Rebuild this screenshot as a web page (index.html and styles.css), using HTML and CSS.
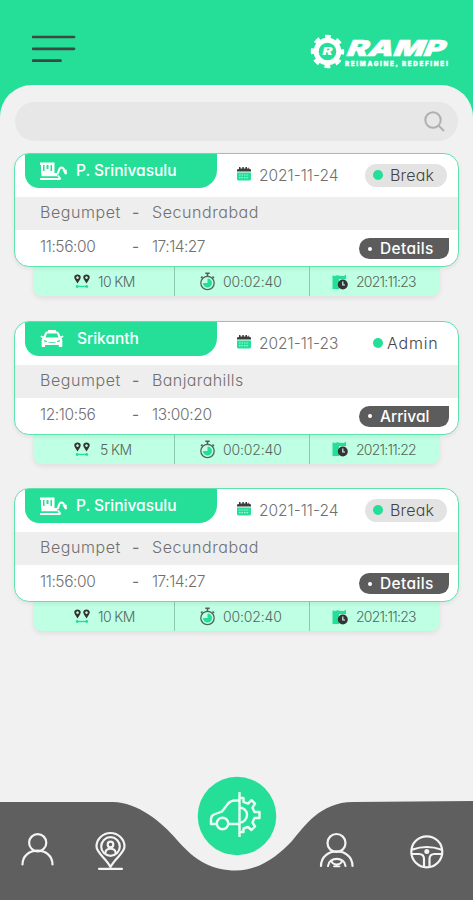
FILE: index.html
```html
<!DOCTYPE html>
<html lang="en">
<head>
<meta charset="utf-8">
<title>Ramp trips</title>
<link rel="stylesheet" href="styles.css">
</head>
<body>
<svg class="defs" width="0" height="0">
  <symbol id="train" viewBox="0 0 28 19">
    <path fill="#fff" fill-rule="evenodd" d="M0 .5H14.500V11L18 14.300H1.500V11.500L1 11V3H0ZM3 3V9H4.500V3ZM6.500 3V7H8.500V3ZM10.500 3V9H12V3Z"/>
    <path d="M0 17H20.500" stroke="#fff" stroke-width="2"/>
    <path d="M14 12H16.500Q18 12 18.500 9.500Q19.500 5.500 21.500 5.500Q23.500 5.500 24.300 8.500" fill="none" stroke="#fff" stroke-width="2"/>
    <path d="M22.500 8L26.500 7.500L27 12L25 12.500Z" fill="#fff"/>
    <path d="M18 13.500l2.500 3.500" stroke="#fff" stroke-width="1.800"/>
  </symbol>
  <symbol id="car" viewBox="0 0 24 18">
    <path fill="#fff" fill-rule="evenodd" d="M8 0h8v1.500h1q1.500 0 2 1.500l1.500 3.500L23 5.500l.5 1.500-2 1 .8 2V17h-3.500v-2H5v2H1.700V10l.8-2-2-1L1 5.500l2.500 1L5 3q.5-1.500 2-1.500h1ZM7 3.500L5.500 7.500h13L17 3.500ZM4 10v1.500l3 .5V11ZM20 10v1.500l-3 .5V11ZM8.500 12.300v.8h7v-.8Z"/>
  </symbol>
  <symbol id="calendar" viewBox="0 0 14 14">
    <path fill="#3c3c3c" d="M0 4.500V2.500L2 2V0h1.500v1.500h1.800V0h1.500v1.500h1.600V0H10v1.500h1.500V0l1 2 1.500.5v2Z"/>
    <path fill="#25df99" d="M0 5.500h14V12q0 1.500-1.500 1.500h-11Q0 13.500 0 12Z"/>
    <path stroke="#9cf3d0" stroke-width="1.200" stroke-dasharray="1.600 .9" d="M2 8h10M2 10.600h10"/>
  </symbol>
  <symbol id="pins" viewBox="0 0 16 15">
    <path fill="#333" fill-rule="evenodd" d="M3.500 9.500L1 5.500C-.8 2.500 1 .5 3.500.5S7.800 2.500 6 5.500ZM3.500 2.300a1.300 1.300 0 1 0 .01 0ZM12.500 9.500L10 5.500C8.200 2.500 10 .5 12.500.5s4.300 2 2.500 5ZM12.500 2.300a1.300 1.300 0 1 0 .01 0Z"/>
    <path d="M2 12.500h12" stroke="#25df99" stroke-width="1.300"/>
    <circle cx="3.200" cy="12.500" r="1.400" fill="#25df99"/><circle cx="12.700" cy="12.500" r="1.400" fill="#25df99"/>
  </symbol>
  <symbol id="watch" viewBox="0 0 16 19">
    <circle cx="8" cy="11" r="6.700" fill="none" stroke="#50635b" stroke-width="1.300"/>
    <path d="M8 1v3.500M5.800 1.200h4.400M13 4.500l1.500 1.500M3 4.500L1.500 6" stroke="#50635b" stroke-width="1.600"/>
    <path d="M8 6.500V11H3.500A4.500 4.500 0 1 0 8 6.500Z" fill="#25df99"/>
  </symbol>
  <symbol id="schedule" viewBox="0 0 16 16">
    <path fill="#25df99" d="M.5 1.500L4 2l1-1 2 .8L12 2l2-1.500V5H7v10H.5Z"/>
    <circle cx="10.800" cy="10.500" r="5" fill="#333"/>
    <path d="M10.800 7.500v3.500h2.200" stroke="#d5fff0" stroke-width="1.200" fill="none"/>
  </symbol>
</svg>
<div class="app">
  <header class="header">
    <svg class="menu" width="44" height="30" viewBox="0 0 44 30"><path d="M1 3h41M1 14.800h41M1 26.700h27.500" stroke="#3b4843" stroke-width="2.700" stroke-linecap="round"/></svg>
    <svg class="logo" width="140" height="37" viewBox="0 0 140 37">
      <circle cx="17.500" cy="18.500" r="11.300" fill="none" stroke="#fff" stroke-width="5"/>
      <circle cx="17.500" cy="18.500" r="14.700" fill="none" stroke="#fff" stroke-width="4" stroke-dasharray="5.800 5.745" stroke-dashoffset="2.900"/>
      <text x="12.500" y="22" class="logo-r" textLength="10" lengthAdjust="spacingAndGlyphs">R</text>
      <text transform="translate(36.500 23) skewX(-10)" class="logo-name" textLength="98" lengthAdjust="spacingAndGlyphs">RAMP</text>
      <text x="35" y="32.500" class="logo-tag" textLength="103">REIMAGINE, REDEFINE!</text>
    </svg>
  </header>
  <main class="sheet">
    <div class="search"><svg width="22" height="22" viewBox="0 0 22 22"><circle cx="9" cy="9" r="7.700"/><path d="M14.500 14.500l5.500 5.500"/></svg></div>
    <section class="trip">
      <article class="card">
        <div class="top">
          <div class="tab"><svg width="28" height="19"><use href="#train"/></svg><span class="name">P. Srinivasulu</span></div>
          <svg class="cal" width="14" height="14"><use href="#calendar"/></svg><span class="date">2021-11-24</span>
          <div class="status pill"><i></i><span>Break</span></div>
        </div>
        <div class="route"><span class="from">Begumpet</span><b>-</b><span class="to">Secundrabad</span></div>
        <div class="times"><span class="t1">11:56:00</span><b>-</b><span class="t2">17:14:27</span><button class="action details"><i></i><span>Details</span></button></div>
      </article>
      <footer class="stats">
        <div class="km"><svg width="16" height="15"><use href="#pins"/></svg><span>10 KM</span></div>
        <div class="dur"><svg width="17" height="19"><use href="#watch"/></svg><span>00:02:40</span></div>
        <div class="day"><svg width="16" height="16"><use href="#schedule"/></svg><span>2021:11:23</span></div>
      </footer>
    </section>
    <section class="trip">
      <article class="card">
        <div class="top">
          <div class="tab"><svg class="car" width="24" height="18"><use href="#car"/></svg><span class="name">Srikanth</span></div>
          <svg class="cal" width="14" height="14"><use href="#calendar"/></svg><span class="date">2021-11-23</span>
          <div class="status plain"><i></i><span>Admin</span></div>
        </div>
        <div class="route"><span class="from">Begumpet</span><b>-</b><span class="to banjara">Banjarahills</span></div>
        <div class="times"><span class="t1">12:10:56</span><b>-</b><span class="t2 wide">13:00:20</span><button class="action"><i></i><span>Arrival</span></button></div>
      </article>
      <footer class="stats">
        <div class="km short"><svg width="16" height="15"><use href="#pins"/></svg><span>5 KM</span></div>
        <div class="dur"><svg width="17" height="19"><use href="#watch"/></svg><span>00:02:40</span></div>
        <div class="day"><svg width="16" height="16"><use href="#schedule"/></svg><span>2021:11:22</span></div>
      </footer>
    </section>
    <section class="trip">
      <article class="card">
        <div class="top">
          <div class="tab"><svg width="28" height="19"><use href="#train"/></svg><span class="name">P. Srinivasulu</span></div>
          <svg class="cal" width="14" height="14"><use href="#calendar"/></svg><span class="date">2021-11-24</span>
          <div class="status pill"><i></i><span>Break</span></div>
        </div>
        <div class="route"><span class="from">Begumpet</span><b>-</b><span class="to">Secundrabad</span></div>
        <div class="times"><span class="t1">11:56:00</span><b>-</b><span class="t2">17:14:27</span><button class="action details"><i></i><span>Details</span></button></div>
      </article>
      <footer class="stats">
        <div class="km"><svg width="16" height="15"><use href="#pins"/></svg><span>10 KM</span></div>
        <div class="dur"><svg width="17" height="19"><use href="#watch"/></svg><span>00:02:40</span></div>
        <div class="day"><svg width="16" height="16"><use href="#schedule"/></svg><span>2021:11:23</span></div>
      </footer>
    </section>
  </main>
  <nav class="nav">
    <svg width="473" height="130" viewBox="0 770 473 130">
      <path fill="#5f5f5f" d="M0 802H113C137 802 162 822 177 840C195 861 213 870.500 236 870.500C259 870.500 278 856 292 841C304 827 320 802 353 802L473 801V900H0Z"/>
      <circle cx="237" cy="816" r="39.300" fill="#25df99"/>
      <g fill="none" stroke="#f4f4f4" stroke-width="2.200" stroke-linecap="round" stroke-linejoin="round">
        <circle cx="37.700" cy="842.700" r="8.600"/><path d="M22.500 864.500C22.500 846 52.500 846 52.500 864.500"/>
        <path d="M110.500 867C106 858 96.500 853 96.500 846.500a14 13.500 0 0 1 28 0C124.500 853 115 858 110.500 867Z"/>
        <circle cx="110.500" cy="846.500" r="9.300"/><circle cx="110.500" cy="844.500" r="2.800"/><path d="M105.500 852.500c0-5 10-5 10 0M99 868.800h23"/>
        <circle cx="336.500" cy="843" r="9"/><path d="M321 866C321 846.500 352.500 846.500 352.500 866M328 866C329 856.500 344.500 856.500 345.500 866"/>
        <path d="M331.500 861.500q1.500 3 5.200 3t5.200-3M334 866.300h5.500" stroke-width="1.800"/>
        <circle cx="426.800" cy="851.800" r="15.500"/><path d="M412.500 849.500Q426.800 844.500 441 849.500M412 854h7q5 0 5 5v7.500M441.500 854H434.500q-5 0-5 5v7.500"/>
      </g>
      <circle cx="426.800" cy="851.500" r="2.500" fill="#f4f4f4"/>
      <g fill="none" stroke="#eafff5" stroke-width="2.400" stroke-linejoin="round">
        <path d="M239.500 792v45M239.500 800.500H234Q229 801 225.500 807L222 811.500L214 814.500Q211 816 211 819V824H216M229 824H239.500"/>
        <circle cx="222.500" cy="823.500" r="5.700"/>
        <path d="M239.500 798h4v4l4.500 1.700 3.500-3.500 3.500 3.500-2.500 4 2 4.300h5v6h-5l-2 4.500 2.500 4-3.500 3.500-3.500-3-4.500 1.500v3.500h-4M239.500 807.500a7.500 7.500 0 0 1 0 15"/>
      </g>
    </svg>
  </nav>
</div>
</body>
</html>
```
FILE: styles.css
```css
* { box-sizing: border-box; }
body { margin: 0; font-family: Inter, "Open Sans", sans-serif; font-feature-settings: "cv11" 1; font-weight: 300; color: #707070; }
.defs { display: block; }
svg { flex: none; display: block; }
.app { width: 473px; height: 900px; display: flex; flex-direction: column; background: #25df99; overflow: hidden; }
.header { height: 85px; flex: none; display: flex; justify-content: space-between; align-items: flex-start; padding: 33px 23px 0 32px; }
.menu { margin-top: 1px; }
.logo { fill: #fff; font-family: Inter, sans-serif; font-weight: 900; font-style: italic; }
.logo-name { font-size: 22px; stroke: #fff; stroke-width: 0.600px; }
.logo-r { font-size: 10px; }
.logo-tag { font-size: 6.200px; font-style: normal; stroke: #fff; stroke-width: 0.300px; }
.sheet { height: 685px; flex: none; background: #f1f1f1; border-radius: 32px 32px 0 0; padding: 17px 14px 0; }
.search { height: 39px; margin: 0 1px 12px; border-radius: 20px; background: #e7e7e7; display: flex; justify-content: flex-end; align-items: center; padding-right: 12px; }
.search svg { fill: none; stroke: #b0b0b0; stroke-width: 2; }
.trip { height: 167.700px; }
.card { position: relative; height: 114px; width: 445px; border: 1.300px solid #5fe3ae; border-radius: 15px; background: #fff; overflow: hidden; box-shadow: 0 2px 4px #0001; }
.top { height: 43px; display: flex; align-items: flex-start; padding-left: 10px; }
.tab { width: 192px; height: 34px; background: #25df99; border-radius: 0 0 18px 14px; display: flex; align-items: center; padding-left: 15px; color: #fff; font-weight: 500; font-size: 15.500px; flex: none; }
.name { margin-left: 8px; line-height: 34px; white-space: nowrap; }
.tab .car { margin-right: 5px; }
.cal { margin: 13px 0 0 20px; }
.date { width: 98px; margin: 12px 0 0 8px; font-size: 15.500px; line-height: 20px; white-space: nowrap; }
.status { width: 82px; height: 23px; margin: 10px 0 0 8px; border-radius: 12px; display: flex; align-items: center; padding: 0 0 1px 8px; color: #444; font-size: 16px; }
.status i { width: 10px; height: 10px; border-radius: 50%; background: #25df99; flex: none; }
.pill { background: #e3e3e3; }
.pill span { margin-left: 7px; letter-spacing: 0.200px; }
.plain span { margin-left: 4px; letter-spacing: 0.800px; }
.route, .times { display: flex; align-items: center; height: 33px; padding-left: 25px; font-size: 15.500px; }
.route { background: #eeeeee; padding-bottom: 3px; font-size: 16px; letter-spacing: 0.560px; }
.banjara { letter-spacing: 0.400px; }
.times { height: 36px; padding-bottom: 3px; letter-spacing: -0.400px; }
.from, .t1 { width: 92px; white-space: nowrap; }
b { width: 20px; font-weight: 400; }
.to, .t2 { width: 207px; white-space: nowrap; }
.t2 { letter-spacing: -0.500px; }
.wide { letter-spacing: -0.350px; }
.action { width: 90px; height: 21px; margin-top: 4px; padding: 0 0 0 9px; border: 0; border-radius: 12px 0 11px 12px; background: #5c5c5c; color: #fff; font: 500 15.500px Inter, sans-serif; font-feature-settings: "cv11" 1; letter-spacing: 0; display: flex; align-items: center; flex: none; }
.action i { width: 4px; height: 4px; border-radius: 50%; background: #fff; margin-right: 8px; }
.details { letter-spacing: 0.350px; }
.stats { width: 407px; height: 29px; margin-left: 19px; background: #bfffe4; border-radius: 0 0 9px 9px; display: flex; font-size: 14px; box-shadow: 0 3px 5px #0001; color: #54665e; }
.stats div { display: flex; align-items: center; }
.stats span { white-space: nowrap; }
.km { width: 142px; border-right: 1px solid #8fc9b0; padding-left: 41px; letter-spacing: -0.600px; }
.km span { margin-left: 8px; }
.short span { margin-left: 10px; }
.dur { width: 135px; border-right: 1px solid #8fc9b0; padding-left: 24px; letter-spacing: -0.150px; }
.dur span { margin-left: 7px; }
.day { padding-left: 22px; letter-spacing: -0.750px; }
.day span { margin-left: 8px; }
.nav { height: 130px; flex: none; background: #f1f1f1; }
```
